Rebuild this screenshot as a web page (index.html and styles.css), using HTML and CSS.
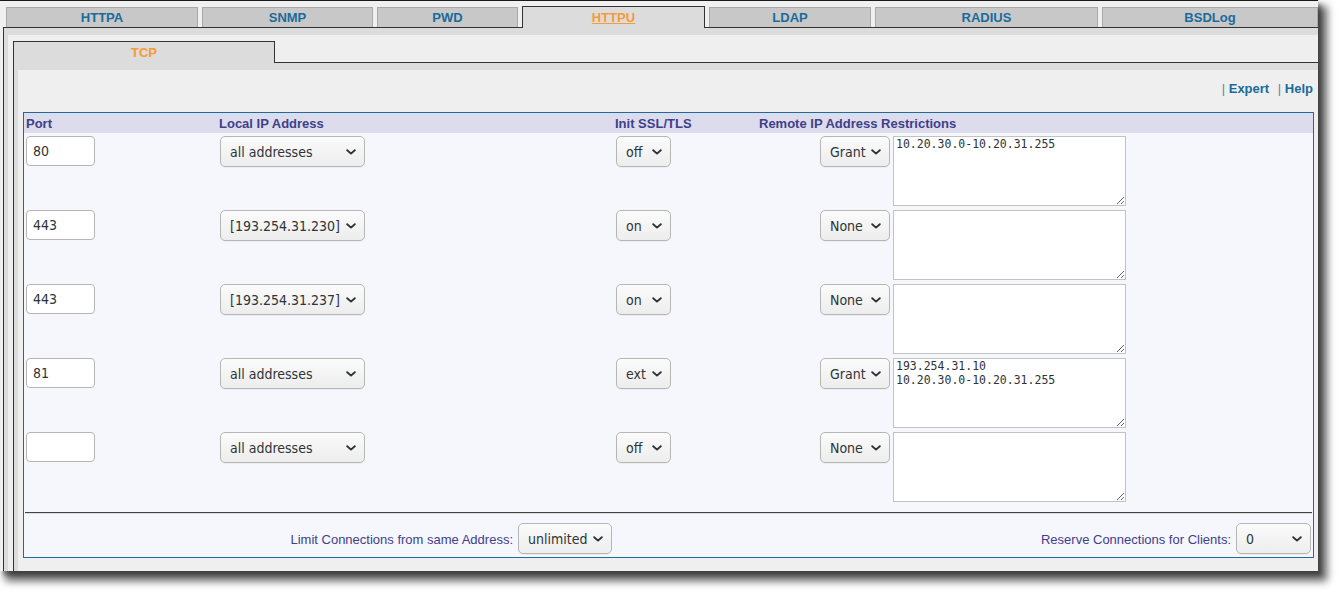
FILE: index.html
```html
<!DOCTYPE html>
<html>
<head>
<meta charset="utf-8">
<title>HTTPU</title>
<link rel="stylesheet" href="styles.css">
</head>
<body>
<div class="window">
  <div class="tabs">
    <div class="tab w-httpa">HTTPA</div>
    <div class="tab w-snmp">SNMP</div>
    <div class="tab w-pwd">PWD</div>
    <div class="tab active w-httpu">HTTPU</div>
    <div class="tab w-ldap">LDAP</div>
    <div class="tab w-radius">RADIUS</div>
    <div class="tab w-bsdlog">BSDLog</div>
  </div>
  <div class="panel">
    <div class="panel-inner">
      <div class="subtabs">
        <div class="subtab">TCP</div>
        <div class="subtab-rest"></div>
      </div>
      <div class="subpanel">
        <div class="subpanel-inner">
          <div class="links"><span class="sep">|</span> <span class="link">Expert</span> <span class="sep sep2">|</span> <span class="link">Help</span></div>
          <div class="box">
            <div class="grid thead">
              <div class="th">Port</div>
              <div class="th">Local IP Address</div>
              <div class="th">Init SSL/TLS</div>
              <div class="th">Remote IP Address Restrictions</div>
            </div>
            <div class="tbody">
              <div class="grid row">
                <div class="cell"><input class="port" type="text" value="80"></div>
                <div class="cell"><span class="sel w-local"><select><option selected>all addresses</option><option>[193.254.31.230]</option><option>[193.254.31.237]</option></select><svg class="chev" width="10" height="6" viewBox="0 0 10 6"><path d="M1.2 1.2 L5 4.6 L8.8 1.2" fill="none" stroke="#2e3436" stroke-width="1.9" stroke-linecap="round" stroke-linejoin="round"/></svg></span></div>
                <div class="cell"><span class="sel w-init"><select><option selected>off</option><option>on</option><option>ext</option></select><svg class="chev" width="10" height="6" viewBox="0 0 10 6"><path d="M1.2 1.2 L5 4.6 L8.8 1.2" fill="none" stroke="#2e3436" stroke-width="1.9" stroke-linecap="round" stroke-linejoin="round"/></svg></span></div>
                <div class="cell remote"><span class="sel w-remote"><select><option selected>Grant</option><option>Deny</option><option>None</option></select><svg class="chev" width="10" height="6" viewBox="0 0 10 6"><path d="M1.2 1.2 L5 4.6 L8.8 1.2" fill="none" stroke="#2e3436" stroke-width="1.9" stroke-linecap="round" stroke-linejoin="round"/></svg></span><textarea>10.20.30.0-10.20.31.255</textarea></div>
              </div>
              <div class="grid row">
                <div class="cell"><input class="port" type="text" value="443"></div>
                <div class="cell"><span class="sel w-local"><select><option>all addresses</option><option selected>[193.254.31.230]</option><option>[193.254.31.237]</option></select><svg class="chev" width="10" height="6" viewBox="0 0 10 6"><path d="M1.2 1.2 L5 4.6 L8.8 1.2" fill="none" stroke="#2e3436" stroke-width="1.9" stroke-linecap="round" stroke-linejoin="round"/></svg></span></div>
                <div class="cell"><span class="sel w-init"><select><option>off</option><option selected>on</option><option>ext</option></select><svg class="chev" width="10" height="6" viewBox="0 0 10 6"><path d="M1.2 1.2 L5 4.6 L8.8 1.2" fill="none" stroke="#2e3436" stroke-width="1.9" stroke-linecap="round" stroke-linejoin="round"/></svg></span></div>
                <div class="cell remote"><span class="sel w-remote"><select><option>Grant</option><option>Deny</option><option selected>None</option></select><svg class="chev" width="10" height="6" viewBox="0 0 10 6"><path d="M1.2 1.2 L5 4.6 L8.8 1.2" fill="none" stroke="#2e3436" stroke-width="1.9" stroke-linecap="round" stroke-linejoin="round"/></svg></span><textarea></textarea></div>
              </div>
              <div class="grid row">
                <div class="cell"><input class="port" type="text" value="443"></div>
                <div class="cell"><span class="sel w-local"><select><option>all addresses</option><option>[193.254.31.230]</option><option selected>[193.254.31.237]</option></select><svg class="chev" width="10" height="6" viewBox="0 0 10 6"><path d="M1.2 1.2 L5 4.6 L8.8 1.2" fill="none" stroke="#2e3436" stroke-width="1.9" stroke-linecap="round" stroke-linejoin="round"/></svg></span></div>
                <div class="cell"><span class="sel w-init"><select><option>off</option><option selected>on</option><option>ext</option></select><svg class="chev" width="10" height="6" viewBox="0 0 10 6"><path d="M1.2 1.2 L5 4.6 L8.8 1.2" fill="none" stroke="#2e3436" stroke-width="1.9" stroke-linecap="round" stroke-linejoin="round"/></svg></span></div>
                <div class="cell remote"><span class="sel w-remote"><select><option>Grant</option><option>Deny</option><option selected>None</option></select><svg class="chev" width="10" height="6" viewBox="0 0 10 6"><path d="M1.2 1.2 L5 4.6 L8.8 1.2" fill="none" stroke="#2e3436" stroke-width="1.9" stroke-linecap="round" stroke-linejoin="round"/></svg></span><textarea></textarea></div>
              </div>
              <div class="grid row">
                <div class="cell"><input class="port" type="text" value="81"></div>
                <div class="cell"><span class="sel w-local"><select><option selected>all addresses</option><option>[193.254.31.230]</option><option>[193.254.31.237]</option></select><svg class="chev" width="10" height="6" viewBox="0 0 10 6"><path d="M1.2 1.2 L5 4.6 L8.8 1.2" fill="none" stroke="#2e3436" stroke-width="1.9" stroke-linecap="round" stroke-linejoin="round"/></svg></span></div>
                <div class="cell"><span class="sel w-init"><select><option>off</option><option>on</option><option selected>ext</option></select><svg class="chev" width="10" height="6" viewBox="0 0 10 6"><path d="M1.2 1.2 L5 4.6 L8.8 1.2" fill="none" stroke="#2e3436" stroke-width="1.9" stroke-linecap="round" stroke-linejoin="round"/></svg></span></div>
                <div class="cell remote"><span class="sel w-remote"><select><option selected>Grant</option><option>Deny</option><option>None</option></select><svg class="chev" width="10" height="6" viewBox="0 0 10 6"><path d="M1.2 1.2 L5 4.6 L8.8 1.2" fill="none" stroke="#2e3436" stroke-width="1.9" stroke-linecap="round" stroke-linejoin="round"/></svg></span><textarea>193.254.31.10
10.20.30.0-10.20.31.255</textarea></div>
              </div>
              <div class="grid row">
                <div class="cell"><input class="port" type="text" value=""></div>
                <div class="cell"><span class="sel w-local"><select><option selected>all addresses</option><option>[193.254.31.230]</option><option>[193.254.31.237]</option></select><svg class="chev" width="10" height="6" viewBox="0 0 10 6"><path d="M1.2 1.2 L5 4.6 L8.8 1.2" fill="none" stroke="#2e3436" stroke-width="1.9" stroke-linecap="round" stroke-linejoin="round"/></svg></span></div>
                <div class="cell"><span class="sel w-init"><select><option selected>off</option><option>on</option><option>ext</option></select><svg class="chev" width="10" height="6" viewBox="0 0 10 6"><path d="M1.2 1.2 L5 4.6 L8.8 1.2" fill="none" stroke="#2e3436" stroke-width="1.9" stroke-linecap="round" stroke-linejoin="round"/></svg></span></div>
                <div class="cell remote"><span class="sel w-remote"><select><option>Grant</option><option>Deny</option><option selected>None</option></select><svg class="chev" width="10" height="6" viewBox="0 0 10 6"><path d="M1.2 1.2 L5 4.6 L8.8 1.2" fill="none" stroke="#2e3436" stroke-width="1.9" stroke-linecap="round" stroke-linejoin="round"/></svg></span><textarea></textarea></div>
              </div>
            </div>
            <div class="separator"></div>
            <div class="tfoot">
              <div class="fcell"><span class="flabel">Limit Connections from same Address:</span><span class="sel w-unlim"><select><option selected>unlimited</option><option>1</option><option>2</option></select><svg class="chev" width="10" height="6" viewBox="0 0 10 6"><path d="M1.2 1.2 L5 4.6 L8.8 1.2" fill="none" stroke="#2e3436" stroke-width="1.9" stroke-linecap="round" stroke-linejoin="round"/></svg></span></div>
              <div class="fcell"><span class="flabel">Reserve Connections for Clients:</span><span class="sel w-reserve"><select><option selected>0</option><option>1</option><option>2</option></select><svg class="chev" width="10" height="6" viewBox="0 0 10 6"><path d="M1.2 1.2 L5 4.6 L8.8 1.2" fill="none" stroke="#2e3436" stroke-width="1.9" stroke-linecap="round" stroke-linejoin="round"/></svg></span></div>
            </div>
          </div>
        </div>
      </div>
    </div>
  </div>
</div>
</body>
</html>
```

FILE: styles.css
```css
* { box-sizing: border-box; }
html, body { margin: 0; padding: 0; background: #ffffff; }
body {
  font-family: "Liberation Sans", Arial, sans-serif;
  font-size: 13px;
  width: 1338px;
  height: 591px;
}

.window {
  width: 1318px;
  height: 571px;
  background: #f0f0f0;
  border-top: 1px solid #1a1a1a;
  box-shadow: 7px 8px 8px 2px rgba(0, 0, 0, 0.62), 3px 4px 4px rgba(0, 0, 0, 0.35);
  overflow: hidden;
  display: flex;
  flex-direction: column;
}

/* top tabs */
.tabs {
  display: flex;
  align-items: flex-end;
  gap: 4px;
  height: 26px;
  padding: 6px 0 0 6px;
  flex: none;
}
.tab {
  height: 20px;
  background: #c8c8c8;
  border: 1px solid #a9a9a9;
  border-bottom: 0;
  color: #1a6b9b;
  font-weight: bold;
  text-align: center;
  line-height: 19px;
}
.tab.active {
  height: 22px;
  margin-bottom: -1px;
  background: #dcdcdc;
  border-color: #333333;
  color: #f59b37;
  text-decoration: underline;
  line-height: 21px;
  position: relative;
  z-index: 1;
}
.w-httpa { width: 192px; }
.w-snmp { width: 171px; }
.w-pwd { width: 141px; }
.w-httpu { width: 183px; }
.w-ldap { width: 162px; }
.w-radius { width: 223px; }
.w-bsdlog { width: 216px; }

/* outer panel */
.panel {
  flex: 1;
  margin-left: 3px;
  border-top: 1px solid #333333;
  border-left: 1px solid #333333;
  background: #dcdcdc;
  padding: 7px 0 0 4px;
  display: flex;
  flex-direction: column;
}
.panel-inner {
  flex: 1;
  background: #efefef;
  padding: 6px 0 0 5px;
  display: flex;
  flex-direction: column;
}

/* sub tabs */
.subtabs { display: flex; height: 22px; flex: none; }
.subtab {
  width: 262px;
  border: 1px solid #333333;
  border-bottom: 0;
  background: #dcdcdc;
  color: #f59b37;
  font-weight: bold;
  text-align: center;
  line-height: 21px;
}
.subtab-rest { flex: 1; border-bottom: 1px solid #333333; }

.subpanel {
  flex: 1;
  border-left: 1px solid #333333;
  background: #dcdcdc;
  padding: 7px 0 0 4px;
  display: flex;
  flex-direction: column;
}
.subpanel-inner {
  flex: 1;
  background: #efefef;
  padding: 11px 4px 0 5px;
}

.links {
  height: 16px;
  line-height: 16px;
  text-align: right;
  padding-right: 1px;
}
.links .sep { color: #6b7fa3; }
.links .sep2 { margin-left: 5px; }
.links .link { color: #1a6b9b; font-weight: bold; }

/* table box */
.box {
  margin-top: 15px;
  border: 1px solid #1e6c9e;
  background: #f5f7fc;
}
.grid {
  display: grid;
  grid-template-columns: 194px 396px 144px 1fr;
}
.thead {
  height: 20px;
  line-height: 21px;
  background: #dcdcec;
  color: #3f3f8a;
  font-weight: bold;
}
.th { padding-left: 1px; white-space: nowrap; }
.th:first-child { padding-left: 2px; }

.tbody {
  padding-top: 3px;
  display: flex;
  flex-direction: column;
  gap: 4px;
}
.row { height: 70px; align-items: start; }
.cell { padding-left: 2px; }
.cell.remote { display: flex; gap: 3px; padding-left: 62px; align-items: flex-start; }

/* controls */
.port, select {
  font-family: "DejaVu Sans Condensed", "DejaVu Sans", sans-serif;
  font-size: 14px;
  color: #2e3436;
}
.port {
  width: 69px;
  height: 30px;
  border: 1px solid #b6b6b3;
  border-radius: 4px;
  background: #ffffff;
  padding: 0 6px;
  margin: 0;
  outline: none;
}
.sel {
  position: relative;
  display: inline-block;
  vertical-align: top;
}
.sel select {
  -webkit-appearance: none;
  appearance: none;
  width: 100%;
  height: 31px;
  margin: 0;
  border: 1px solid #b6b6b3;
  border-radius: 5px;
  background: linear-gradient(#fbfbfb, #ededed);
  box-shadow: 0 1px 0 rgba(0, 0, 0, 0.04);
  padding: 0 0 0 9px;
  outline: none;
}
.sel .chev {
  position: absolute;
  right: 9px;
  top: 13px;
  pointer-events: none;
}
.w-local { width: 145px; }
.w-init { width: 55px; }
.w-remote { width: 70px; }
.w-unlim { width: 94px; }
.w-reserve { width: 75px; }

textarea {
  width: 233px;
  height: 70px;
  margin: 0;
  border: 1px solid #c2c2c0;
  background: #ffffff;
  padding: 0 2px;
  font-family: "DejaVu Sans Mono", monospace;
  font-size: 11.5px;
  line-height: 14px;
  color: #2e3436;
  outline: none;
}

.separator {
  margin: 10px 1px 0;
  border-top: 1px solid #444444;
  border-bottom: 1px solid #dcdce4;
}
.tfoot {
  display: grid;
  grid-template-columns: 590px 1fr;
  padding: 9px 0 3px;
}
.fcell {
  display: flex;
  justify-content: flex-end;
  align-items: center;
  gap: 5px;
  padding-right: 2px;
}
.flabel { color: #40408a; padding-top: 1px; }
```
